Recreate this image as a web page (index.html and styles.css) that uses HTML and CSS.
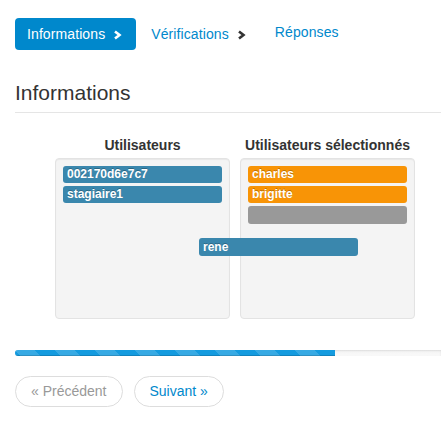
FILE: index.html
```html
<!DOCTYPE html>
<html lang="fr">
<head>
<meta charset="utf-8">
<title>Informations</title>
<link rel="stylesheet" href="styles.css">
</head>
<body>
<div class="page">
  <nav class="steps">
    <a class="step step-active">Informations
      <svg class="chev" viewBox="0 0 9 10" width="9" height="10"><polyline points="2,1.5 6.5,5 2,8.5" fill="none" stroke="currentColor" stroke-width="2.6"/></svg>
    </a>
    <a class="step">Vérifications
      <svg class="chev chev-dark" viewBox="0 0 9 10" width="9" height="10"><polyline points="2,1.5 6.5,5 2,8.5" fill="none" stroke="currentColor" stroke-width="2.6"/></svg>
    </a>
    <a class="step step-last">Réponses</a>
  </nav>

  <h2 class="section-title">Informations</h2>

  <div class="columns">
    <div class="column">
      <h4 class="col-title">Utilisateurs</h4>
      <div class="well">
        <div class="chip chip-info">002170d6e7c7</div>
        <div class="chip chip-info">stagiaire1</div>
      </div>
    </div>
    <div class="column">
      <h4 class="col-title">Utilisateurs sélectionnés</h4>
      <div class="well">
        <div class="chip chip-warning">charles</div>
        <div class="chip chip-warning">brigitte</div>
        <div class="chip chip-placeholder"></div>
      </div>
    </div>
    <div class="chip chip-info chip-dragging">rene</div>
  </div>

  <div class="progress">
    <div class="bar" style="width: 75.1%"></div>
  </div>

  <ul class="pager">
    <li class="pager-item pager-disabled">« Précédent</li>
    <li class="pager-item">Suivant »</li>
  </ul>
</div>
</body>
</html>
```

FILE: styles.css
```css
html, body {
  margin: 0;
  padding: 0;
  background: #fff;
}

body {
  font-family: "Liberation Sans", Arial, sans-serif;
  color: #333;
  overflow: hidden;
}

.page {
  padding: 18px 0 0 15px;
}

/* Steps navigation */
.steps {
  display: flex;
  align-items: center;
  height: 32px;
  font-size: 14px;
  letter-spacing: 0.1px;
}

.step {
  display: flex;
  align-items: center;
  gap: 8px;
  color: #0088cc;
  text-decoration: none;
  margin-right: 29px;
}

.step-active {
  height: 32px;
  padding: 0 14px 0 12px;
  background: #0088cc;
  color: #fff;
  border-radius: 4px;
  margin-right: 15px;
}

.chev {
  display: block;
  margin-top: 1px;
}

.chev-dark {
  color: #333;
}

.step-last {
  margin-bottom: 4px;
}

/* Section heading */
.section-title {
  margin: 31px 0 0;
  padding-bottom: 7px;
  font-size: 21px;
  line-height: 24px;
  font-weight: normal;
  color: #333;
  border-bottom: 1px solid #e5e5e5;
}

/* Columns */
.columns {
  position: relative;
  display: flex;
  gap: 10px;
  margin: 24px 0 0 40px;
}

.column {
  width: 175px;
}

.col-title {
  margin: 0 0 5px;
  font-size: 14px;
  line-height: 16px;
  font-weight: bold;
  text-align: center;
  color: #333;
}

.well {
  box-sizing: border-box;
  height: 161px;
  padding: 7px;
  background: #f4f4f4;
  border: 1px solid #e3e3e3;
  border-radius: 4px;
  box-shadow: inset 0 1px 1px rgba(0, 0, 0, 0.05);
}

.chip {
  box-sizing: border-box;
  height: 17px;
  margin-bottom: 3px;
  padding: 0 4px;
  border-radius: 3px;
  font-size: 12px;
  line-height: 17px;
  font-weight: bold;
  color: #fff;
  text-shadow: 0 -1px 0 rgba(0, 0, 0, 0.25);
  white-space: nowrap;
}

.chip-info {
  background: #3a87ad;
}

.chip-warning {
  background: #f89406;
}

.chip-placeholder {
  background: #999;
  height: 18px;
}

.chip-dragging {
  position: absolute;
  left: 144px;
  top: 101px;
  width: 159px;
  height: 18px;
  line-height: 18px;
  margin: 0;
}

/* Progress */
.progress {
  height: 6px;
  margin-top: 31px;
  overflow: hidden;
  background: linear-gradient(to bottom, #f5f5f5, #f9f9f9);
  border-radius: 4px 0 0 4px;
  box-shadow: inset 0 1px 2px rgba(0, 0, 0, 0.1);
}

.bar {
  height: 100%;
  background-color: #149bdf;
  background-image: linear-gradient(45deg,
    rgba(255, 255, 255, 0.15) 25%, transparent 25%, transparent 50%,
    rgba(255, 255, 255, 0.15) 50%, rgba(255, 255, 255, 0.15) 75%,
    transparent 75%, transparent);
  background-size: 40px 40px;
  box-shadow: inset 0 -1px 0 rgba(0, 0, 0, 0.15);
}

/* Pager */
.pager {
  display: flex;
  gap: 11px;
  margin: 20px 0 0;
  padding: 0;
  list-style: none;
}

.pager-item {
  height: 31px;
  box-sizing: border-box;
  padding: 0 15px;
  border: 1px solid #ddd;
  border-radius: 16px;
  font-size: 14px;
  line-height: 29px;
  color: #0088cc;
  background: #fff;
}

.pager-disabled {
  color: #999;
}
```
